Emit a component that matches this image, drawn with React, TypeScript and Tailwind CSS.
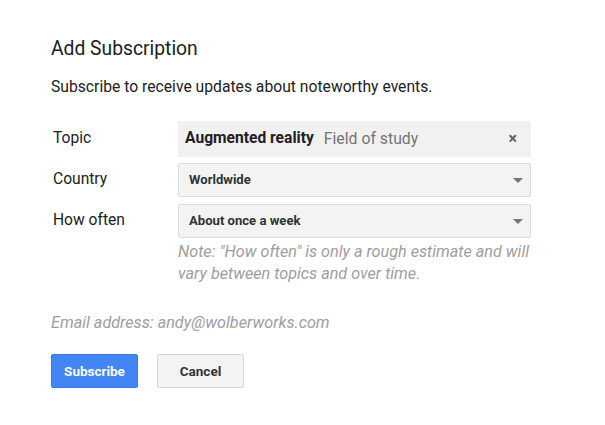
import React from "react";

function Caret() {
  return (
    <svg width="10" height="5" viewBox="0 0 10 5" className="shrink-0">
      <path d="M0 0 L10 0 L5 5 Z" fill="#757575" />
    </svg>
  );
}

export default function App() {
  return (
    <div
      className="w-[605px] h-[425px] bg-white overflow-hidden pl-[51px] pt-[37px] text-[#212121]"
      style={{ fontFamily: "Roboto, 'Liberation Sans', sans-serif" }}
    >
      <div className="text-[19.3px] leading-[24px] text-[#212121]">Add Subscription</div>
      <div className="mt-[15px] text-[15.7px] leading-[22px] text-[#212121]">
        Subscribe to receive updates about noteworthy events.
      </div>

      <div className="mt-[23px] flex flex-col w-[480px]">
        <div className="flex items-center h-[36px]">
          <div className="w-[127px] pl-[2px] text-[15.6px]">Topic</div>
          <div className="flex-1 h-[36px] bg-[#f1f1f1] flex items-center pl-[7px] pr-[14px]">
            <span className="font-bold text-[15.6px] text-[#212121]">Augmented reality</span>
            <span className="ml-[10px] text-[15.8px] text-[#757575]">Field of study</span>
            <span className="ml-auto text-[#616161] text-[16px] font-bold leading-none">×</span>
          </div>
        </div>

        <div className="flex items-center h-[34px] mt-[6px]">
          <div className="w-[127px] pl-[2px] text-[15.6px]">Country</div>
          <div className="flex-1 h-[34px] bg-[#f3f3f3] border border-[#dcdcdc] rounded-[2px] flex items-center pl-[10px] pr-[7px]">
            <span className="font-bold text-[13.1px] text-[#333]">Worldwide</span>
            <span className="ml-auto"><Caret /></span>
          </div>
        </div>

        <div className="flex items-center h-[34px] mt-[7px]">
          <div className="w-[127px] pl-[2px] text-[15.6px]">How often</div>
          <div className="flex-1 h-[34px] bg-[#f3f3f3] border border-[#dcdcdc] rounded-[2px] flex items-center pl-[10px] pr-[7px]">
            <span className="font-bold text-[13.1px] text-[#333]">About once a week</span>
            <span className="ml-auto"><Caret /></span>
          </div>
        </div>

        <div className="ml-[127px] mt-[3px] italic text-[16.2px] leading-[22px] text-[#9e9e9e]">
          Note: "How often" is only a rough estimate and will vary between topics and over time.
        </div>
      </div>

      <div className="mt-[27px] italic text-[16.2px] leading-[22px] text-[#9e9e9e]">
        Email address: andy@wolberworks.com
      </div>

      <div className="mt-[20px] flex gap-[19px]">
        <button className="w-[87px] h-[34px] bg-[#4285f4] text-white font-bold text-[13.5px] rounded-[2px] border border-[#3b78e7]">
          Subscribe
        </button>
        <button className="w-[87px] h-[34px] bg-[#f3f3f3] text-[#333] font-bold text-[13.5px] rounded-[2px] border border-[#d6d6d6]">
          Cancel
        </button>
      </div>
    </div>
  );
}
